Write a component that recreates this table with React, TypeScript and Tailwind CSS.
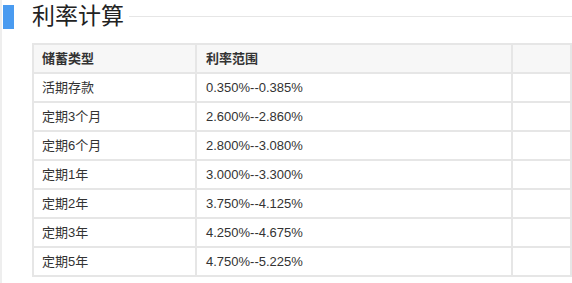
const RATES: Array<{ kind: string; range: string }> = [
  { kind: '活期存款', range: '0.350%--0.385%' },
  { kind: '定期3个月', range: '2.600%--2.860%' },
  { kind: '定期6个月', range: '2.800%--3.080%' },
  { kind: '定期1年', range: '3.000%--3.300%' },
  { kind: '定期2年', range: '3.750%--4.125%' },
  { kind: '定期3年', range: '4.250%--4.675%' },
  { kind: '定期5年', range: '4.750%--5.225%' },
];

export default function App() {
  return (
    <div
      className="h-[283px] w-[572px] overflow-hidden border-l-2 border-[#eeeeee] bg-white text-[#333]"
      style={{ fontFamily: '"Liberation Sans", "Noto Sans CJK SC", sans-serif' }}
    >
      <div className="flex h-[32px] items-center pt-[1px]">
        <div className="ml-[1px] h-[24px] w-[11px] bg-[#4a9bf0]" />
        <h2 className="ml-[18px] text-[23px] leading-none text-[#222]">利率计算</h2>
        <div className="ml-[5px] h-px flex-1 bg-[#e6e6e6]" />
      </div>

      <div className="ml-[30px] mt-[11px]">
        <table className="w-[540px] table-fixed border-collapse text-[13px]">
          <colgroup>
            <col className="w-[163px]" />
            <col className="w-[316px]" />
            <col />
          </colgroup>
          <thead>
            <tr className="h-[29px] bg-[#f7f7f7]">
              <th className="border-2 border-[#e6e6e6] px-[8px] text-left font-bold text-[#333]">储蓄类型</th>
              <th className="border-2 border-[#e6e6e6] px-[9px] text-left font-bold text-[#333]">利率范围</th>
              <th className="border-2 border-[#e6e6e6]" />
            </tr>
          </thead>
          <tbody>
            {RATES.map((r) => (
              <tr key={r.kind} className="h-[29px]">
                <td className="border-2 border-[#e6e6e6] px-[8px]">{r.kind}</td>
                <td className="border-2 border-[#e6e6e6] px-[9px]">{r.range}</td>
                <td className="border-2 border-[#e6e6e6]" />
              </tr>
            ))}
          </tbody>
        </table>
      </div>
    </div>
  );
}
